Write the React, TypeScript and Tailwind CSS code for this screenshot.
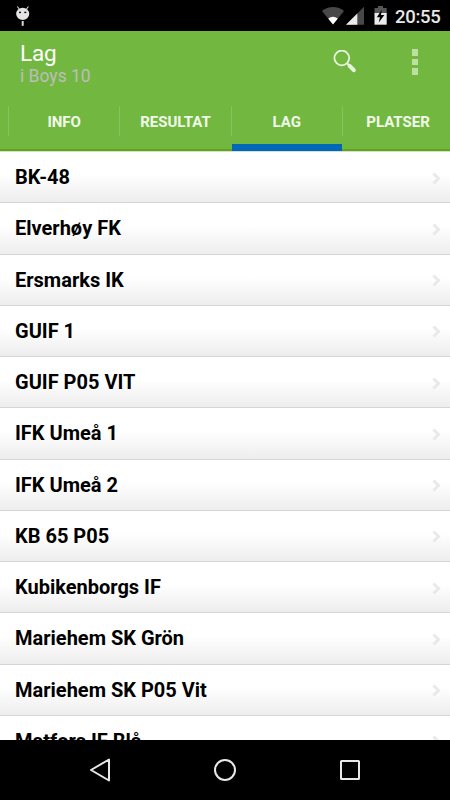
import type { FC } from 'react';
import clsx from 'clsx';

const TABS = ['INFO', 'RESULTAT', 'LAG', 'PLATSER'];

const TEAMS = [
  'BK-48',
  'Elverhøy FK',
  'Ersmarks IK',
  'GUIF 1',
  'GUIF P05 VIT',
  'IFK Umeå 1',
  'IFK Umeå 2',
  'KB 65 P05',
  'Kubikenborgs IF',
  'Mariehem SK Grön',
  'Mariehem SK P05 Vit',
  'Matfors IF Blå',
];

const StatusBar: FC = () => (
  <div className="flex h-[31px] shrink-0 items-start bg-black text-[#e8e8e8]">
    <svg className="ml-4 mt-[6px]" width="14" height="20" viewBox="0 0 14 20" fill="none">
      <path d="M1.3 .5 3.2 3M12.4 .5 10.5 3" stroke="#d8d8d8" strokeWidth="1.1" />
      <ellipse cx="6.7" cy="7.9" rx="6.5" ry="6.2" fill="#e4e4e4" />
      <rect x="3" y="5.7" width="2" height="1.4" fill="#111" />
      <rect x="8.3" y="5.7" width="2" height="1.4" fill="#111" />
      <rect x="5.7" y="15" width="2" height="4.8" fill="#d8d8d8" />
    </svg>

    <svg className="ml-auto mr-[2px] mt-[6px]" width="22" height="19" viewBox="0 0 22 19">
      <path d="M0 5C6-.3 16-.3 22 5L11 18.5Z" fill="#484848" />
      <path d="M6.2 12.4Q11 8.9 15.8 12.4L11 18.5Z" fill="#fff" />
    </svg>
    <svg className="mr-[10px] mt-[6px]" width="18" height="19" viewBox="0 0 18 19">
      <path d="M0 18.8 18 .8V18.8Z" fill="#484848" />
      <path d="M0 18.8 11.3 7.5V18.8Z" fill="#ebebeb" />
    </svg>
    <svg className="mr-[8px] mt-[6px]" width="13" height="19" viewBox="0 0 13 19">
      <path d="M.5 2H4V0h5v2h3.7v6H.5Z" fill="#555" />
      <path d="M.5 7h12.2v11.7H.5Z" fill="#ebebeb" />
      <path d="M7.8 3.8 2.8 11.2H5.9L4.8 16.6 10.4 9H7Z" fill="#000" />
    </svg>
    <span className="mr-[10px] mt-[5px] w-[45px] text-[18.5px] font-medium leading-[24px] tracking-[-0.3px]">20:55</span>
  </div>
);

const ActionBar: FC = () => (
  <div className="flex h-[62px] shrink-0 items-start pl-5">
    <div>
      <h1 className="mt-[8px] text-[22.5px] leading-[28px] tracking-[-0.2px] text-white">Lag</h1>
      <p className="text-[17.5px] leading-[18px] text-[#bdbdbd]">i Boys 10</p>
    </div>
    <button className="ml-auto mt-[19px]" aria-label="Sök">
      <svg width="24" height="24" viewBox="0 0 24 24" fill="none">
        <circle cx="8.8" cy="8" r="7.4" stroke="#e8f3dd" strokeWidth="1.8" />
        <path d="m14 13.2 3 3" stroke="#e8f3dd" strokeWidth="2" />
        <path d="m16.6 15.8 4.2 4.4" stroke="#e8f3dd" strokeWidth="4" strokeLinecap="round" />
      </svg>
    </button>
    <button className="ml-[55px] mr-[32px] mt-[18px] flex flex-col gap-[3px]" aria-label="Meny">
      <span className="size-[6.5px] bg-[#bedfa2]" />
      <span className="size-[6.5px] bg-[#bedfa2]" />
      <span className="size-[6.5px] bg-[#bedfa2]" />
    </button>
  </div>
);

const TabBar: FC<{ active: string }> = ({ active }) => (
  <div className="flex h-[58px] shrink-0 border-b-2 border-[#5fa61a] pl-2">
    {TABS.map((tab) => (
      <div
        key={tab}
        className="relative flex w-[111.3px] shrink-0 items-start justify-center pl-px pt-[13px]"
      >
        <span className="absolute left-0 top-[13px] h-[30px] w-px bg-[#86c35d]" />
        <span className="pt-[6px] text-[15px] font-bold leading-[20px] text-[#f1f8ea]">{tab}</span>
        <span
          className={clsx(
            'absolute -bottom-[2px] left-[1px] right-0 h-[7px]',
            tab === active ? 'bg-[#0068b7]' : 'hidden'
          )}
        />
      </div>
    ))}
  </div>
);

const TeamRow: FC<{ name: string }> = ({ name }) => (
  <li className="flex h-[51.28px] shrink-0 items-start justify-between border-b border-[#d5d5d5] bg-linear-to-b from-white from-45% to-[#ededed] pl-[15px] pr-[9px]">
    <span className="pt-[13px] text-[20px] font-bold leading-[24px] text-black">{name}</span>
    <svg className="mt-[19.5px]" width="9" height="13" viewBox="0 0 9 13" fill="none">
      <path d="m1.5 1.5 5 5-5 5" stroke="#e9e9e9" strokeWidth="3" />
    </svg>
  </li>
);

const NavBar: FC = () => (
  <div className="flex h-[60px] shrink-0 items-center justify-between bg-black pl-[88px] pr-[88px]">
    <svg width="24" height="26" viewBox="0 0 24 26" fill="none">
      <path d="M21 2.5v21L3 13Z" stroke="#e8e8e8" strokeWidth="2" strokeLinejoin="round" />
    </svg>
    <svg width="24" height="24" viewBox="0 0 24 24" fill="none">
      <circle cx="12" cy="12" r="10" stroke="#e8e8e8" strokeWidth="2" />
    </svg>
    <svg width="24" height="24" viewBox="0 0 24 24" fill="none">
      <rect x="3" y="3" width="18" height="18" rx=".5" stroke="#e8e8e8" strokeWidth="2" />
    </svg>
  </div>
);

export default function App() {
  return (
    <div className="flex h-[800px] w-[450px] flex-col overflow-hidden bg-white font-[Roboto,sans-serif]">
      <StatusBar />
      <header className="shrink-0 overflow-hidden bg-[#72b840]">
        <ActionBar />
        <TabBar active="LAG" />
      </header>
      <ul className="flex min-h-0 flex-1 flex-col overflow-hidden border-t border-[#d8ddd4]">
        {TEAMS.map((team) => (
          <TeamRow key={team} name={team} />
        ))}
      </ul>
      <NavBar />
    </div>
  );
}
